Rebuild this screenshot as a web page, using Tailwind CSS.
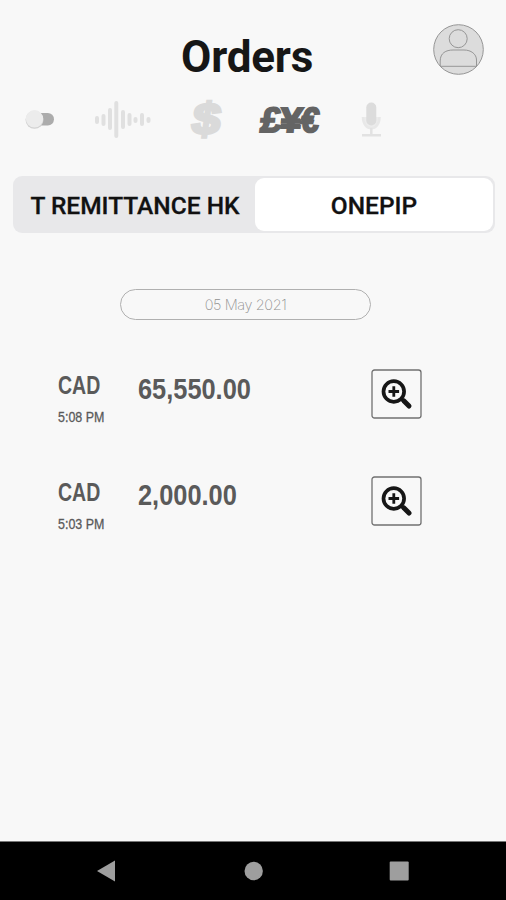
<!DOCTYPE html>
<html lang="en">
<head>
<meta charset="utf-8">
<title>Orders</title>
<script src="https://cdn.jsdelivr.net/npm/@tailwindcss/browser@4"></script>
</head>
<body class="w-[506px] h-[900px] overflow-hidden bg-[#f8f8f8] flex flex-col font-['Roboto',sans-serif]">
<main class="flex-1 flex flex-col">
  <header class="flex justify-between pl-[181px] pr-[22px] pt-6 h-[93px]">
    <h1 class="text-[44px] leading-[52px] font-bold text-[#161616] pt-[7px] tracking-[-0.2px]">Orders</h1>
    <svg width="51" height="51" viewBox="0 0 51 51" fill="none" stroke="#969696" stroke-width="1">
      <circle cx="25.5" cy="25.5" r="24.8" fill="#dcdcdc"/>
      <circle cx="25.2" cy="14.7" r="9"/>
      <path d="M7.2 42V37C7.2 29 13 26 20 26H31C38 26 43.5 30 43.5 36V42M7 42.3H44"/>
    </svg>
  </header>
  <svg class="block" width="506" height="54" viewBox="0 0 506 54">
    <rect x="33" y="20" width="21" height="12.5" rx="6.2" fill="#acacac"/>
    <circle cx="34.5" cy="26.8" r="9" fill="#d2d2d2"/>
    <circle cx="34.5" cy="25.8" r="8.7" fill="#ececec"/>
    <g stroke="#e0e0e0" stroke-width="4" stroke-linecap="round">
      <path d="M97 25V29M103.5 23V31M110 17V35M116.3 10V43M123 19V34M129.5 22V31M135.5 26V28M142 22V31M148.5 26V28"/>
    </g>
    <text transform="translate(190.5 40.8) skewX(-8)" font-family="Liberation Sans" font-weight="bold" font-size="44" textLength="28" lengthAdjust="spacingAndGlyphs" fill="#dadada" stroke="#dadada" stroke-width="3">$</text>
    <g font-family="Liberation Sans" font-weight="bold" font-size="35" fill="#646464" stroke="#646464" stroke-width="2">
      <text transform="translate(259.5 38.5) skewX(-6)" textLength="20.5" lengthAdjust="spacingAndGlyphs">£</text>
      <text transform="translate(279 38.5) skewX(-6)" textLength="22" lengthAdjust="spacingAndGlyphs">¥</text>
      <text transform="translate(300 38.5) skewX(-6)" textLength="18" lengthAdjust="spacingAndGlyphs">€</text>
    </g>
    <path d="M281 26.5H300M281 32H300" stroke="#646464" stroke-width="2.5"/>
    <path d="M363 24C363 39 379.5 39 379.5 24" fill="#ececec" stroke="#e8e8e8" stroke-width="2.5"/>
    <path d="M371.3 35V41M362 42.3H381" fill="none" stroke="#e2e2e2" stroke-width="2.5"/>
    <rect x="366.3" y="9.5" width="10" height="23" rx="5" fill="#dcdcdc"/>
  </svg>
  <div class="mt-[29px] ml-[13px] w-[482px] h-[57px] p-[2px] rounded-[9px] bg-[#e8e8ea] flex text-[24.5px] font-medium text-[#111]">
    <div class="w-[240px] flex items-center justify-center whitespace-nowrap pt-[3px]"><span class="[-webkit-text-stroke:0.3px]">T REMITTANCE HK</span></div>
    <div class="flex-1 rounded-[9px] bg-white flex items-center justify-center pt-[3px]"><span class="[-webkit-text-stroke:0.3px]">ONEPIP</span></div>
  </div>
  <div class="mt-[56px] ml-[120px] w-[251px] h-[31px] rounded-full border border-[#b0b0b0] flex items-center justify-center font-['Inter'] font-extralight text-[14.5px] text-[#909090] tracking-[-0.4px]">05 May 2021</div>
  <section class="mt-[49px] flex flex-col gap-[57px] pl-[58px] font-['Liberation_Sans'] text-[#5a5a5a]">
    <div class="flex h-[50px] items-start">
      <div class="w-[80px] flex flex-col">
        <span class="h-[34px] text-[25px] leading-[33px] font-bold origin-left scale-x-[0.78]">CAD</span>
        <span class="text-[14px] leading-[29px] whitespace-nowrap origin-left scale-x-[0.89] [-webkit-text-stroke:0.3px]">5:08 PM</span>
      </div>
      <span class="w-[233px] text-[29.5px] leading-[39px] font-bold origin-left scale-x-[0.86]">65,550.00</span>
      <svg class="shrink-0" width="51" height="50" viewBox="0 0 51 50" fill="none" stroke="#161616"><rect x="1" y="1" width="49" height="48" rx="2.5" stroke="#707070" stroke-width="1.3"/><circle cx="22.8" cy="22.5" r="10.3" stroke-width="3.7"/><path d="M17.5 22.5H28.1M22.8 17.2V27.8" stroke-width="2.8"/><path d="M30.5 30L33 32.5" stroke-width="3.5"/><path d="M33 32L38 37" stroke-width="5" stroke-linecap="round"/></svg>
    </div>
    <div class="flex h-[50px] items-start">
      <div class="w-[80px] flex flex-col">
        <span class="h-[34px] text-[25px] leading-[33px] font-bold origin-left scale-x-[0.78]">CAD</span>
        <span class="text-[14px] leading-[29px] whitespace-nowrap origin-left scale-x-[0.89] [-webkit-text-stroke:0.3px]">5:03 PM</span>
      </div>
      <span class="w-[233px] text-[29.5px] leading-[38px] font-bold origin-left scale-x-[0.86]">2,000.00</span>
      <svg class="shrink-0" width="51" height="50" viewBox="0 0 51 50" fill="none" stroke="#161616"><rect x="1" y="1" width="49" height="48" rx="2.5" stroke="#707070" stroke-width="1.3"/><circle cx="22.8" cy="22.5" r="10.3" stroke-width="3.7"/><path d="M17.5 22.5H28.1M22.8 17.2V27.8" stroke-width="2.8"/><path d="M30.5 30L33 32.5" stroke-width="3.5"/><path d="M33 32L38 37" stroke-width="5" stroke-linecap="round"/></svg>
    </div>
  </section>
</main>
<nav class="h-[59px] shrink-0 bg-black border-t border-[#777]">
  <svg class="block" width="506" height="58" viewBox="0 0 506 58" fill="#9e9e9e"><path d="M97 29L115 18.5V39.5Z"/><circle cx="253.7" cy="29" r="9.2"/><rect x="389.7" y="19.5" width="19" height="19" rx="1"/></svg>
</nav>
</body>
</html>
